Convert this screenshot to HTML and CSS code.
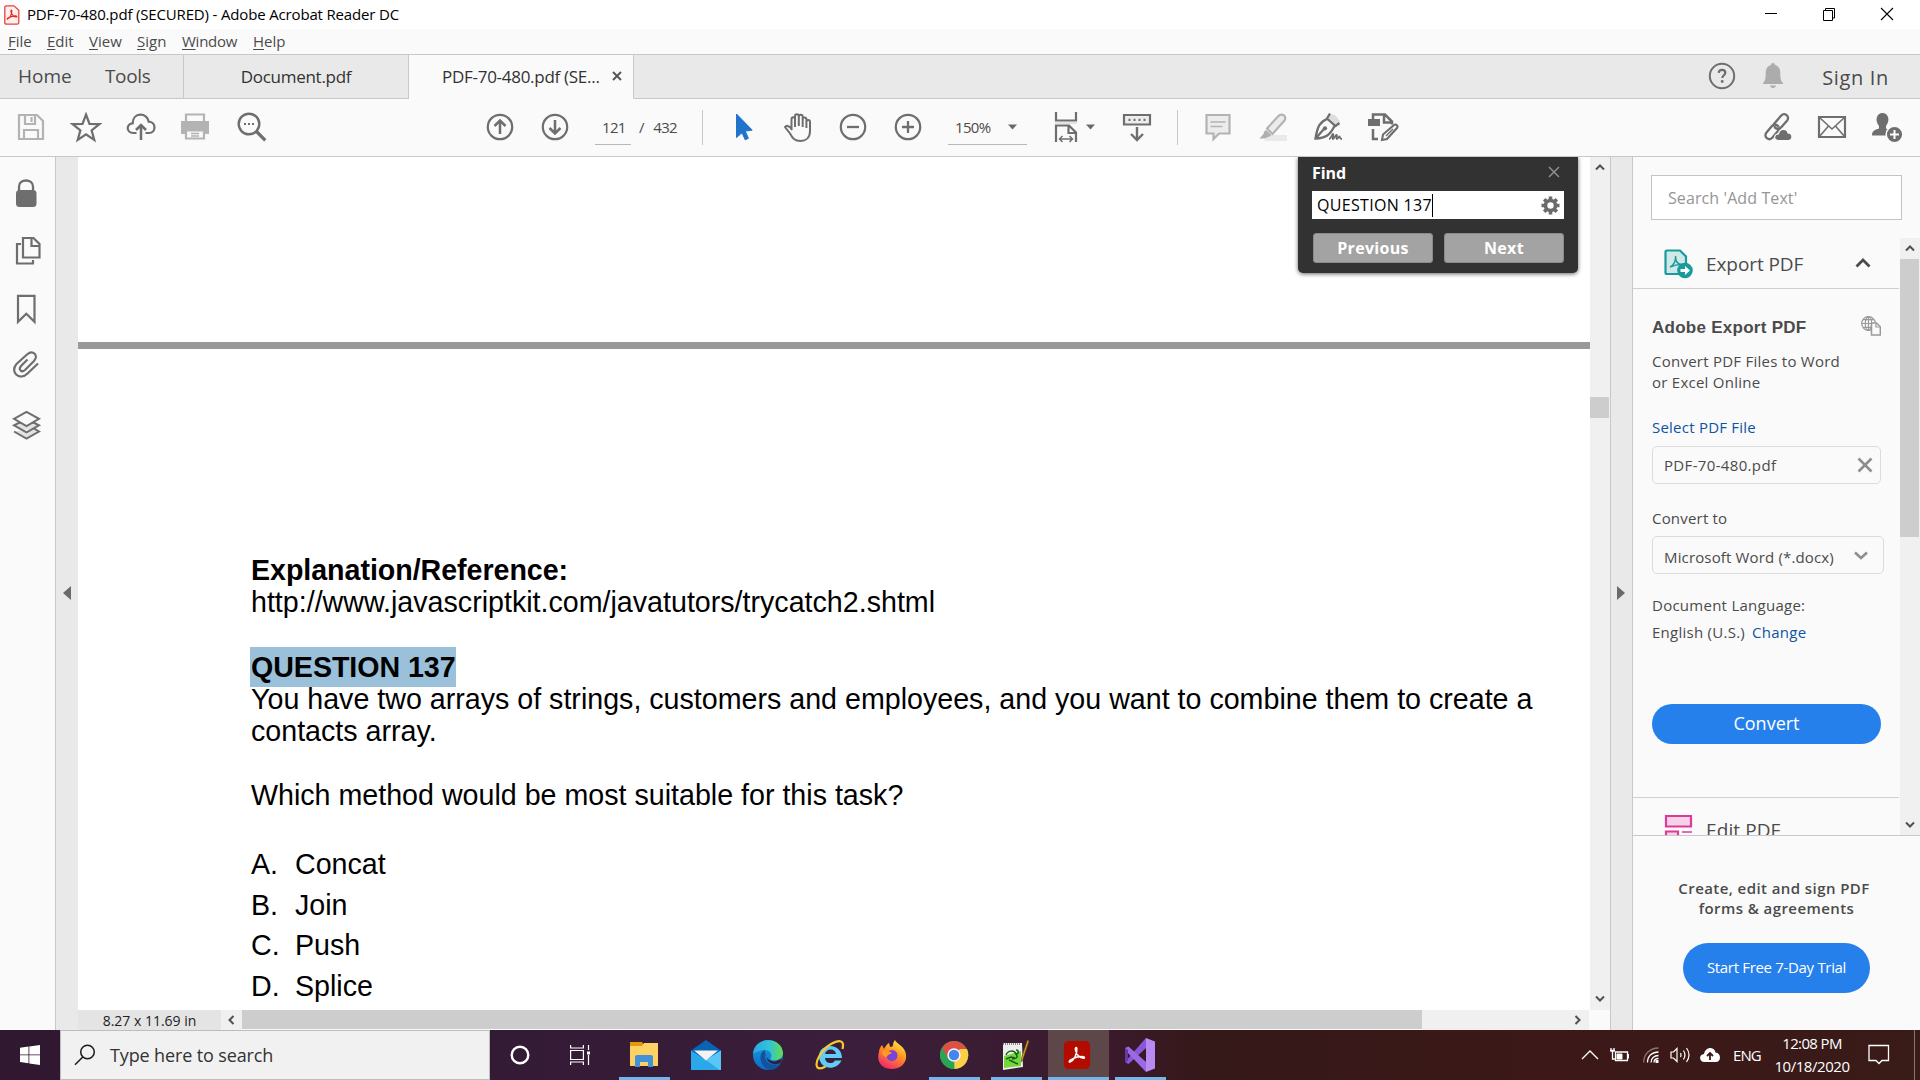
FILE: index.html
```html
<!DOCTYPE html>
<html lang="en">
<head>
<meta charset="utf-8">
<title>PDF-70-480.pdf (SECURED) - Adobe Acrobat Reader DC</title>
<link rel="stylesheet" href="styles.css">
</head>
<body>
<div class="window">
  <header class="titlebar">
    <svg class="app-icon" width="16" height="20" viewBox="0 0 16 20"><path d="M2.500 .8h7.500l4.800 4.400v12.300q0 1.700-1.700 1.700H2.500q-1.700 0-1.700-1.700v-15Q.8.8 2.500.8z" fill="#fff0ef" stroke="#e8413b" stroke-width="1.300"/><path d="M3.500 14c2.500-1 4.500-5 4.300-8.200-.1-1.300-1.300-.6-.8 1 .8 2.700 2.700 5 5.200 5.200 1.200 0 .8-1.300-1-1.200-2.600.2-5 .9-7.200 2.200-1.200.8-.9 1.300-.5 1z" fill="none" stroke="#e8281e" stroke-width="1.200"/></svg>
    <span class="title">PDF-70-480.pdf (SECURED) - Adobe Acrobat Reader DC</span>
    <div class="win-buttons">
      <svg width="14" height="14" viewBox="0 0 14 14"><path d="M1 6.500h12" stroke="#000"/></svg>
      <svg width="14" height="14" viewBox="0 0 14 14"><path d="M1.500 3.500h9v10h-9zM3.500 3.500v-2h9v9.500h-2" fill="none" stroke="#000"/></svg>
      <svg width="14" height="14" viewBox="0 0 14 14"><path d="M1 1l12 12M13 1L1 13" stroke="#000" stroke-width="1.100"/></svg>
    </div>
  </header>
  <nav class="menubar">
    <span class="m1"><u>F</u>ile</span><span class="m2"><u>E</u>dit</span><span class="m3"><u>V</u>iew</span><span class="m4"><u>S</u>ign</span><span class="m5"><u>W</u>indow</span><span class="m6"><u>H</u>elp</span>
  </nav>
  <div class="tabbar">
    <div class="main-tabs"><span class="home">Home</span><span class="tools">Tools</span></div>
    <div class="tab"><span>Document.pdf</span></div>
    <div class="tab active"><span class="tab-b">PDF-70-480.pdf (SE...</span><svg width="10" height="10" viewBox="0 0 10 10"><path d="M1 1l8 8M9 1L1 9" stroke="#555" stroke-width="1.900"/></svg></div>
    <div class="account">
      <svg width="28" height="28" viewBox="0 0 28 28"><circle cx="14" cy="14" r="12.200" fill="none" stroke="#6e6e6e" stroke-width="2"/><path d="M10.700 10.800c.3-3.800 6.600-3.800 6.600 0 0 2.400-3 2.500-3 5.200" fill="none" stroke="#6e6e6e" stroke-width="2.200"/><circle cx="14.200" cy="19.500" r="1.400" fill="#6e6e6e"/></svg>
      <svg class="bell" width="22" height="26" viewBox="0 0 22 26"><path d="M11 0c1.300 0 2 .9 2 2 4 1 5.300 4.500 5.300 8 0 6 .7 8.500 2.700 9.700V21H1v-1.300C3 18.500 3.700 16 3.700 10c0-3.500 1.300-7 5.300-8 0-1.100.7-2 2-2zM8 22.500h6c-.4 3.300-5.600 3.300-6 0z" fill="#acacac"/></svg>
      <span class="signin">Sign In</span>
    </div>
  </div>
  <div class="toolbar">
    <div class="icons">
      <svg class="ic light" viewBox="0 0 32 32"><path d="M4 4h18l6 6v18H4z" /><path d="M10 4v9h10V4M16.500 6v5M9 28v-9h14v9" /></svg>
      <svg class="ic" viewBox="0 0 32 32"><path d="M16 3.500l3.500 9.300 9.900.3-7.800 6.200 2.700 9.600-8.300-5.500-8.300 5.500 2.700-9.600-7.800-6.200 9.900-.3z"/></svg>
      <svg class="ic" viewBox="0 0 32 32"><path d="M11.500 22H8.500C.8 22 1 12.500 7.700 12.300 7.500 1 22.500 1 23.700 10.700 31.500 11 31.200 22 24 22h-3.500"/><path d="M16 29V14.500M11 19l5-5 5 5" stroke-width="2.500"/></svg>
      <svg class="ic light" viewBox="0 0 32 32"><path d="M6 12V3.500h18V12z"/><path d="M1 10h28v13H1z" fill="#b3b3b3" stroke="none"/><path d="M6 19.500h18v8H6z" fill="#fafafa"/><path d="M11 22.500h8M11 25h8" stroke-width="1.300"/></svg>
      <svg class="ic" viewBox="0 0 32 32"><circle cx="14" cy="13" r="10.300" stroke-width="2.400"/><path d="M21.500 20.500l8.800 8.800" stroke-width="3.200"/><path d="M9 13h2M13 13h2M17 13h2" stroke-width="2"/></svg>
    </div>
    <div class="icons g-nav">
      <svg class="ic" viewBox="0 0 32 32"><circle cx="16" cy="16" r="12.200"/><path d="M16 23V10M10.500 15l5.500-5.500 5.500 5.500" stroke-width="2.500"/></svg>
      <svg class="ic" viewBox="0 0 32 32"><circle cx="16" cy="16" r="12.200"/><path d="M16 9v13M10.500 17l5.500 5.500 5.500-5.500" stroke-width="2.500"/></svg>
    </div>
    <div class="page-field"><span>121</span></div>
    <div class="page-total"><span>/</span><span>432</span></div>
    <i class="divider d1"></i>
    <div class="icons g-tools">
      <svg class="ic" viewBox="0 0 32 32"><path d="M9.500 3v23.500l5.500-4.700 3.200 7 3.200-1.500-3.200-7.200 7-1z" fill="#2073cb" stroke="#2073cb" stroke-width="1"/></svg>
      <svg class="ic" viewBox="0 0 32 32"><path d="M9.500 19V8.500c0-3 3.500-3 3.500 0V16M13 9V5.500c0-3 3.800-3 3.800 0V15M16.800 6c0-3 3.900-3 3.900 0v10M20.700 8.500c0-2.800 3.700-2.800 3.700 0V17M24.400 11c0-2.600 3.600-2.600 3.600 0v9c0 7-4.500 10-9.500 10-6 0-8-3-10.500-7.500l-5-6.500c1.500-2 4-1 5.200.5l2 2.500" stroke-width="2"/></svg>
      <svg class="ic" viewBox="0 0 32 32"><circle cx="16" cy="16" r="12.200"/><path d="M10 16h12" stroke-width="2.300"/></svg>
      <svg class="ic" viewBox="0 0 32 32"><circle cx="16" cy="16" r="12.200"/><path d="M10 16h12M16 10v12" stroke-width="2.300"/></svg>
    </div>
    <div class="zoom-field"><span>150%</span><svg class="caret" width="9" height="6" viewBox="0 0 9 6"><path d="M0 .5h9L4.500 5.500z" fill="#6a6a6a"/></svg></div>
    <svg class="ic g-fit" viewBox="0 0 32 32"><path d="M6 1v8.500h20V1"/><path d="M5 12h22" stroke="#ddd" stroke-width="1.500"/><path d="M6 31V14.500h13l7 7V31M18.500 15v7H26"/><path d="M9.500 28h13M12.500 25l-3 3 3 3M19.500 25l3 3-3 3" stroke-width="1.500"/></svg>
    <svg class="caret g-caret" width="9" height="6" viewBox="0 0 9 6"><path d="M0 .5h9L4.500 5.500z" fill="#6a6a6a"/></svg>
    <svg class="ic g-read" viewBox="0 0 32 32"><path d="M3 4h26v9.500H3z" fill="#ededed"/><path d="M7.500 8.800h2M12.500 8.800h2M17.500 8.800h2M22.500 8.800h2"/><path d="M16 16v12M10 23l6 6 6-6" stroke-width="2.400"/></svg>
    <i class="divider d2"></i>
    <div class="icons g-edit">
      <svg class="ic light" viewBox="0 0 32 32"><path d="M4.500 4h23v18.500H17L11.500 28v-5.500h-7z" fill="#ececec"/><path d="M8.500 11h15M8.500 15.500h12" stroke-width="1.600"/></svg>
      <svg class="ic light" viewBox="0 0 32 32"><path d="M11 24h19v6H7z" fill="#e9e9e9" stroke="none"/><path d="M10 17.500L21 5.500c3.500-4 9.500-.5 6.500 4L15.500 23z" fill="#ececec"/><path d="M9 19l5.500 5c-1.500 1.500-2.500 1.500-4 2l-2 1.500H2.500L6.500 23c0-1.500 1-3 2.500-4z" fill="#b0b0b0" stroke="none"/></svg>
      <svg class="ic" viewBox="0 0 32 32"><path d="M18 3l5 1 5 6-4 5-8-8z" fill="#ddd" stroke="none"/><path d="M18 2.500l-3 5 8.500 7.500 4-3M15 8C8 11 5.500 15 3.500 27.500 14 27 18 24 22.500 15M4 27l8-9" stroke-width="2.300"/><circle cx="13" cy="17.300" r="2.100" fill="#6e6e6e" stroke="none"/><path d="M17 28c2 0 3-5 4-5s-1 5 0 5 2.500-4 3.500-4-.5 4 .5 4 1.500-2.500 2.300-2.500 0 2.500 2.700 2.500" stroke-width="1.800"/></svg>
      <svg class="ic" viewBox="0 0 32 32"><path d="M1 8h12v7H1z" fill="#6e6e6e" stroke="none"/><path d="M6 8V3.500h12l7 7v3M17 4v7.500h8M6 18v10h5" stroke-width="2.500"/><path d="M15 29l1-5.500L27 14c2-1.500 4.500 1 3 3L20 28z" stroke-width="2.100"/><path d="M19 25l7-7" stroke-width="1.500"/></svg>
    </div>
    <div class="icons g-share">
      <svg class="ic" viewBox="0 0 32 32"><g fill="none" stroke-width="2.300"><path d="M12.500 13.500l7.500-8.700c3.500-4 9.500.6 6 4.900L20.500 16c-2.500 3-6.500 2-7.300-1"/><path d="M19 17.500l-7.500 9c-3.500 4-9.500-.6-6-4.900L10.500 15.500c2.500-3 6.500-2 7.300 1"/></g><path d="M17 29.500c-4.500 0-4.500-6.500.5-6.500 1-6.500 9-5.500 9.500-1 5.500.5 5 7.500 0 7.500z" fill="#6e6e6e" stroke="#fafafa" stroke-width="1.200"/></svg>
      <svg class="ic" viewBox="0 0 32 32"><path d="M3 6h26v20H3z"/><path d="M3.500 6.500L16 18 28.500 6.500M3.500 25.500l9-10.500M28.500 25.500l-9-10.500" stroke-width="1.600"/></svg>
      <svg class="ic" viewBox="0 0 32 32"><path d="M1 24.500c0-5 3-5.500 7-7V15C3.500 9.500 5.500 2 11.500 2S19.500 9.500 15 15v2.500c2 .8 4 1.300 5.500 2.500L17 24.500z" fill="#6e6e6e" stroke="none"/><circle cx="23.500" cy="23.500" r="8.300" fill="#6e6e6e" stroke="#fafafa" stroke-width="1.500"/><path d="M19 23.500h9M23.500 19v9" stroke="#fff" stroke-width="2"/></svg>
    </div>
  </div>

  <div class="workspace">
    <aside class="rail">
      <svg viewBox="0 0 32 32"><path d="M9 15V9.500c0-8 14-8 14 0V15" fill="none" stroke="#6e6e6e" stroke-width="2.300"/><rect x="6" y="13" width="20.500" height="17" rx="3.500" fill="#6e6e6e" stroke="none"/></svg>
      <svg viewBox="0 0 32 32"><path d="M11 9H7v19.500h16V25M13 3h10.500l6 6v13.500H13zM21.500 3.500V11h7.500"/></svg>
      <svg viewBox="0 0 32 32"><path d="M8 2.800h16.500v26l-8.200-8-8.300 8z"/></svg>
      <svg class="clip" viewBox="0 0 32 32"><path d="M28 15.500L17.500 25.500c-8 8-18-1.500-11-9.500L17 6.500c6-5 12 1 7 6.500l-9 9c-3.500 3-7-.5-4-4l6.500-6.500"/></svg>
      <svg viewBox="0 0 32 32"><path d="M4 22.500l12.500 7 12.500-7-5-3M4 16.300l5-2.500 15 0 5 2.500-12.500 7z" fill="#e2e2e2" stroke-width="2"/><path d="M4 9.800l12.500-7 12.500 7-12.500 7.200z" fill="#fafafa" stroke-width="2"/></svg>
    </aside>
    <div class="gutter"><svg width="8" height="14" viewBox="0 0 8 14"><path d="M8 0v14L0 7z" fill="#6a6a6a"/></svg></div>
    <main class="viewer">
      <div class="view-main">
        <div class="pages">
          <div class="page-end"></div>
          <article class="page">
            <p class="b">Explanation/Reference:</p>
            <p>http://www.javascriptkit.com/javatutors/trycatch2.shtml</p>
            <p class="b q"><mark>QUESTION 137</mark></p>
            <p>You have two arrays of strings, customers and employees, and you want to combine them to create a<br>contacts array.</p>
            <p class="ask">Which method would be most suitable for this task?</p>
            <ol><li><span>A.</span>Concat</li><li><span>B.</span>Join</li><li><span>C.</span>Push</li><li><span>D.</span>Splice</li></ol>
          </article>
          <section class="find">
            <div class="find-head"><b>Find</b><svg width="12" height="12" viewBox="0 0 12 12"><path d="M1 1l10 10M11 1L1 11" stroke="#909090" stroke-width="1.500"/></svg></div>
            <div class="find-input"><span>QUESTION 137</span><svg width="19" height="19" viewBox="-9.500 -9.500 19 19"><circle r="5" fill="none" stroke="#6a6a6a" stroke-width="3.600"/><path d="M0-9v3M0 9V6M-9 0h3M9 0H6M-6.300-6.300l2 2M6.300 6.300l-2-2M-6.300 6.300l2-2M6.300-6.300l-2 2" stroke="#6a6a6a" stroke-width="3.600"/></svg></div>
            <div class="find-btns"><b>Previous</b><b>Next</b></div>
          </section>
        </div>
        <div class="vscroll">
          <svg width="10" height="8" viewBox="0 0 10 8"><path d="M1 6.500l4-4 4 4" /></svg>
          <i class="thumb"></i>
          <svg class="down" width="10" height="8" viewBox="0 0 10 8"><path d="M1 1.500l4 4 4-4" /></svg>
        </div>
      </div>
      <div class="hrow">
        <span class="size">8.27 x 11.69 in</span>
        <span class="hbtn"><svg width="8" height="10" viewBox="0 0 8 10"><path d="M6.500 1l-4 4 4 4"/></svg></span>
        <i class="hthumb"></i>
        <span class="htrack"><svg width="8" height="10" viewBox="0 0 8 10"><path d="M1.500 1l4 4-4 4"/></svg></span>
      </div>
    </main>
    <div class="gutter right"><svg width="8" height="14" viewBox="0 0 8 14"><path d="M0 0v14l8-7z" fill="#6a6a6a"/></svg></div>
    <aside class="panel">
      <div class="search-wrap"><div class="search">Search 'Add Text'</div></div>
      <div class="panel-scroll">
        <div class="panel-body">
          <div class="sec-head">
            <svg width="30" height="30" viewBox="0 0 30 30"><path d="M3 1.500h13l6 6V25H3q-1.500 0-1.500-1.500V3q0-1.500 1.500-1.500z" fill="#cfe8e8" stroke="#1b9a9a" stroke-width="2.200"/><path d="M6 18c4-2 5.800-6 5.600-11M11.600 8c0 4 2 7.500 6.500 7.500-4 0-8 .5-12.100 2.500" fill="none" stroke="#1b9a9a" stroke-width="1.400"/><circle cx="21" cy="21.500" r="7.800" fill="#1b9a9a"/><path d="M16.500 20h4.500v-3l5 4.500-5 4.500v-3h-4.500z" fill="#fff"/></svg>
            <span class="sec-title">Export PDF</span>
            <svg class="chev" width="16" height="10" viewBox="0 0 16 10"><path d="M1.500 8.500L8 2l6.500 6.500" fill="none" stroke="#4b4b4b" stroke-width="2.800"/></svg>
          </div>
          <div class="export">
            <div class="exp-title"><b>Adobe Export PDF</b><svg width="20" height="20" viewBox="0 0 20 20"><g fill="none" stroke="#9a9a9a" stroke-width="1.200"><circle cx="7.500" cy="7.500" r="6.800"/><ellipse cx="7.500" cy="7.500" rx="3.200" ry="6.800"/><path d="M.7 7.500h13.600M7.500.7v13.600M2 3.700h11M2 11.300h11"/><path d="M10.500 7h5l3.800 3.800V19h-8.800z" fill="#fafafa" stroke-width="1.500"/><path d="M15 7.500V11h4"/></g></svg></div>
            <p class="desc">Convert PDF Files to Word<br>or Excel Online</p>
            <a class="sel-file">Select PDF File</a>
            <div class="box file"><span>PDF-70-480.pdf</span><svg width="16" height="16" viewBox="0 0 16 16"><path d="M1.500 1.500l13 13M14.500 1.500l-13 13" stroke="#8e8e8e" stroke-width="2.600"/></svg></div>
            <label class="conv">Convert to</label>
            <div class="box select"><span>Microsoft Word (*.docx)</span><svg width="14" height="9" viewBox="0 0 14 9"><path d="M1 1.500l6 5.500 6-5.500" fill="none" stroke="#8e8e8e" stroke-width="2.500"/></svg></div>
            <p class="lang">Document Language:<br>English (U.S.)<a class="change">Change</a></p>
            <div class="convert">Convert</div>
          </div>
          <div class="sec-head edit">
            <svg width="30" height="30" viewBox="0 0 30 30"><path d="M2 2h25v10.500H2zM2 17.500h12V28H2z" fill="#f6d2e8" stroke="#dd3a9a" stroke-width="2.200"/><path d="M18 18h10" stroke="#dd3a9a" stroke-width="1.500"/></svg>
            <span class="sec-title">Edit PDF</span>
          </div>
        </div>
        <div class="vscroll">
          <svg width="10" height="8" viewBox="0 0 10 8"><path d="M1 6.500l4-4 4 4" /></svg>
          <i class="thumb"></i>
          <svg class="down" width="10" height="8" viewBox="0 0 10 8"><path d="M1 1.500l4 4 4-4" /></svg>
        </div>
      </div>
      <div class="promo">
        <p><span class="lead">Create, edit and sign PDF</span><br>forms &amp; agreements</p>
        <div class="trial">Start Free 7-Day Trial</div>
      </div>
    </aside>
  </div>

  <footer class="taskbar">
    <div class="start"><svg width="20" height="20" viewBox="0 0 20 20"><path d="M0 2.800L8.500 1.600v7.900H0zM9.300 1.500L20 0v9.500H9.300zM0 10.300h8.500v7.900L0 17.100zM9.300 10.300H20V20L9.300 18.400z" fill="#fff"/></svg></div>
    <div class="tsearch"><svg width="22" height="22" viewBox="0 0 22 22"><circle cx="13.500" cy="8" r="6.800" fill="none" stroke="#1a1a1a" stroke-width="1.500"/><path d="M8.800 13L1 20.800" stroke="#1a1a1a" stroke-width="1.500"/></svg><span>Type here to search</span></div>
    <div class="task t-cortana"><svg width="20" height="20" viewBox="0 0 20 20"><circle cx="10" cy="10" r="8.300" fill="none" stroke="#fff" stroke-width="2.400"/></svg></div>
    <div class="task t-view"><svg width="20" height="20" viewBox="0 0 20 20"><g fill="none" stroke="#fff" stroke-width="1.200"><path d="M.6 5.500h12.800v9H.6zM.6 0v3h12.800V0M.6 20v-3h12.800v3M18.500 0v5M18.500 10v10"/></g><path d="M17 6.500h3v3h-3z" fill="#fff"/></svg></div>
    <div class="task t-app on"><svg viewBox="0 0 30 30"><path d="M1 2h12l2 3-2 3H1z" fill="#e09a0b"/><path d="M1 6h12l2-3h14v23H1z" fill="#fdd263"/><path d="M6 27V17q0-2 2-2h14q2 0 2 2v10h-5v-5h-8v5z" fill="#4192d9"/></svg></div>
    <div class="task t-app"><svg viewBox="0 0 30 30"><path d="M0 10.500L15 0l15 10.500V20H0z" fill="#0a64b4"/><path d="M0 10.500V31h30V10.500L15 20z" fill="#2ba8ea"/><path d="M15 20l15-9.500V31z" fill="#59c6f7"/><path d="M3 10.500h24L15 20.500z" fill="#f3f3f3"/></svg></div>
    <div class="task t-app"><svg viewBox="0 0 30 30"><defs><linearGradient id="eg" x1="0" x2="1"><stop offset="0" stop-color="#29a8e4"/><stop offset=".55" stop-color="#32c3d8"/><stop offset="1" stop-color="#62de48"/></linearGradient><linearGradient id="eb" x1="0" y1="0" x2="0" y2="1"><stop offset="0" stop-color="#1ba0e2"/><stop offset="1" stop-color="#0b6bc4"/></linearGradient></defs><circle cx="15" cy="15" r="15" fill="url(#eb)"/><path d="M0 14C1-4 29-4 30 13c0 7-9 9-13 6 3-3 1-9-5-9-5 0-9 2-12 4z" fill="url(#eg)"/><path d="M12 10c-8 3-5 18 5 20 5 0 9-3 11-6.500-8 3.500-17-.5-16-9z" fill="#12539f"/><path d="M13 12.500c-2 4 3 9 9 9l7-3c-.5 2-.8 3.500-1.500 4.500-6 3-15.500.5-14.500-10.500z" fill="#361d39"/></svg></div>
    <div class="task t-app"><svg viewBox="0 0 30 30"><path d="M27 18H10c.5 6 8 6.500 10 2.500h6.500C21 32 4 29.500 4 16S27 2 27 18zM10 14h11c-.5-6-10-6-11 0z" fill="#5fcdf8"/><path d="M27.500 9C30-1 23 0 16 4 6 10-1 23 2.500 27.500 4.500 29 8 28 10.500 26.500" fill="none" stroke="#f6c92c" stroke-width="2.200"/></svg></div>
    <div class="task t-app"><svg viewBox="0 0 30 30"><defs><linearGradient id="ff" x1=".8" y1="0" x2=".3" y2="1"><stop offset="0" stop-color="#fff04a"/><stop offset=".45" stop-color="#ff9420"/><stop offset="1" stop-color="#f0246e"/></linearGradient></defs><path d="M18 0c1 3 8 6 10 11 4 10-3 18-13 18S-1 22 2 12c0-2 1-5 3-7l2 4c1-2 3-5 5-6l1 4c2 0 3-1 3-2 0-2 1-4 2-5z" fill="url(#ff)"/><circle cx="15" cy="15.500" r="5.500" fill="#7d42d8"/><path d="M5 12c3-3 7-1 10 1-2 1-5 2-5 4-3 0-5-2-5-5z" fill="#ff9a1f"/></svg></div>
    <div class="task t-app on"><svg viewBox="0 0 30 30"><circle cx="15" cy="15" r="14" fill="#2aa455"/><path d="M15 15L2.900 8A14 14 0 0 1 27.100 8L29 15z" fill="#dd5144"/><path d="M15 15L21 9h7a14 14 0 0 1-12.500 20z" fill="#fdcf46"/><path d="M2.900 8L9 19l6-4V8z" fill="#dd5144"/><path d="M3 8l6 10 6 4-1 7A14 14 0 0 1 3 8z" fill="#2aa455"/><circle cx="15" cy="15" r="6.700" fill="#f5f5f5"/><circle cx="15" cy="15" r="5.200" fill="#4585ee"/></svg></div>
    <div class="task t-app on"><svg viewBox="0 0 30 30"><path d="M2 3h19l1 24L2 30z" fill="#eee"/><path d="M2 4h18" stroke="#888" stroke-width="2" stroke-dasharray="1 1"/><path d="M3 16l17-5v15L3 28z" fill="#75d83a"/><path d="M5 15c2-5 8-5 10-1 3 4-1 5-4 5M15 10c3 0 3 4 0 4M8 20c3 1 6 3 9 4M5 19l5-2 4 1" fill="none" stroke="#17601a" stroke-width="1.500"/><path d="M28 1l-6 18-1.500 3v-4l6-18z" fill="#e6a52a" stroke="#6b4312" stroke-width=".6"/></svg></div>
    <div class="task t-app on current"><svg viewBox="0 0 30 30"><rect x="1" y="0" width="28" height="30" rx="5" fill="#b30b00"/><path d="M7.500 22.500c4-1.500 8-8.500 7.300-14.500-.3-2-2-1-1.500 1.500 1 4.500 4.500 9 8.500 9 2 0 1.500-2-1.500-2-4.500 0-9 1.500-12.500 4-1.500 1.200-1.300 2.500-.3 2z" fill="none" stroke="#fff" stroke-width="1.600"/></svg></div>
    <div class="task t-app on vs"><svg viewBox="0 0 30 34"><path d="M21 0l9 3.500v27L21 34z" fill="#b98af2"/><path d="M21 0v10L3.500 26 0 24 20 1z" fill="#8b57d6"/><path d="M0 10L3.500 8.500 21 24v10L0 12z" fill="#9d68e4"/><path d="M0 10l3 2v11L0 24z" fill="#6a36ae"/></svg></div>
    <div class="tray">
      <svg width="18" height="10" viewBox="0 0 18 10"><path d="M1 9l8-8 8 8" fill="none" stroke="#fff" stroke-width="1.300"/></svg>
      <svg class="y-bat" width="20" height="16" viewBox="0 0 20 16"><path d="M5.500 5h12v8.500h-12z" fill="none" stroke="#fff" stroke-width="1.300"/><path d="M18.500 7v4.500M7 7h5v5H7z" stroke="#fff" fill="#fff" stroke-width="1"/><path d="M1 1v3h3V1M2.500 4v8H5M0 3.500h5" fill="none" stroke="#fff" stroke-width="1.300"/></svg>
      <svg class="y-wifi" width="17" height="16" viewBox="0 0 17 16"><g fill="none" stroke="#fff" stroke-width="1.300"><path d="M.7 15.500C.7 7 7 1 15.500 1" stroke="#8c7270"/><path d="M4.500 15.500C4.500 9 9 5 15.500 5"/><path d="M8 15.500c0-4 3-7 7.500-7"/><path d="M11 15.500c0-2 1.500-4 4.500-4"/></g><path d="M12.500 13h3v3h-3z" fill="#fff"/></svg>
      <svg class="y-vol" width="21" height="18" viewBox="0 0 21 18"><path d="M1 6h2.500L7 2.500v13L3.500 12H1zM10.500 7q1 2 0 4M13.500 4.500q2.800 4.500 0 9M16.500 2q5 7 0 14" fill="none" stroke="#fff" stroke-width="1.200"/></svg>
      <svg class="y-cloud" width="20" height="14" viewBox="0 0 20 14"><path d="M4.500 14C-1 14-1.500 6.500 4 6 5-1.500 14.500-2 15.500 4.500 21.500 5 21.500 14 15.500 14z" fill="#fff"/><path d="M10 12V5M7 8l3-3 3 3" fill="none" stroke="#3c1919" stroke-width="1.800"/></svg>
      <span class="eng">ENG</span>
      <div class="clock"><span class="time">12:08 PM</span><span class="date">10/18/2020</span></div>
      <svg class="y-note" width="22" height="22" viewBox="0 0 22 22"><path d="M1 1.500h19.500v15h-6.500l-3 3-3-3H1z" fill="none" stroke="#fff" stroke-width="1.300"/></svg>
      <i class="peek"></i>
    </div>
  </footer>
</div>
</body>
</html>
```
FILE: styles.css
```css
* { box-sizing: border-box; }
body { margin: 0; font-family: "Open Sans", "Noto Sans", sans-serif; color: #4b4b4b; background: #fafafa; }
p, ol { margin: 0; padding: 0; }
svg { display: block; flex: none; }
span, b, a { white-space: nowrap; }
.window { width: 1920px; height: 1080px; display: flex; flex-direction: column; overflow: hidden; }

.titlebar { height: 29px; background: #fff; display: flex; align-items: center; padding: 0 0 1px 4px; color: #000; font-size: 15px; letter-spacing: -0.16px; }
.titlebar .title { margin-left: 7px; }
.app-icon { margin-top: 1px; }
.win-buttons { margin-left: auto; display: flex; gap: 44px; padding-right: 26px; }

.menubar { height: 25px; background: #fafafa; display: flex; gap: 16px; padding-left: 8px; font-size: 15px; line-height: 25px; }
.menubar u { text-underline-offset: 2px; text-decoration-thickness: 1px; }
.m1 { width: 23px; }
.m2 { width: 26px; }
.m3 { width: 32px; }
.m4 { width: 29px; }
.m5 { width: 55px; letter-spacing: -0.25px; }

.tabbar { height: 45px; background: #e9e9e9; border-top: 1px solid #c8c8c8; display: flex; }
.main-tabs, .tab, .account { border-bottom: 1px solid #c8c8c8; display: flex; align-items: center; padding-bottom: 1px; }
.main-tabs { width: 184px; padding-left: 18px; font-size: 19px; border-right: 1px solid #c8c8c8; }
.home { width: 87px; }
.tools { letter-spacing: -0.35px; }
.tab { width: 225px; border-right: 1px solid #c8c8c8; font-size: 17px; letter-spacing: -0.28px; color: #323232; justify-content: center; }
.tab.active { background: #fafafa; border-bottom-color: #fafafa; justify-content: flex-start; padding-left: 33px; }
.tab-b { width: 170px; }
.account { flex: 1; justify-content: flex-end; padding-right: 31px; font-size: 20px; font-weight: 500; }
.bell { margin-left: 26px; margin-right: 38px; }
.signin { letter-spacing: .65px; padding-top: 2px; }

.toolbar { height: 58px; background: #fafafa; border-bottom: 1px solid #c8c8c8; display: flex; align-items: center; padding: 0 17px 1px 15px; font-size: 15px; letter-spacing: -0.7px; }
.icons { display: flex; gap: 23px; }
.ic { width: 32px; height: 32px; fill: none; stroke: #6e6e6e; stroke-width: 2.2; }
.ic.light { stroke: #b3b3b3; }
.g-nav { margin-left: 217px; }
.page-field { width: 36px; height: 36px; line-height: 36px; margin-left: 24px; border-bottom: 1px solid #b8b8b8; padding-left: 7px; }
.page-total { width: 44px; margin-left: 8px; display: flex; justify-content: space-between; padding-right: 6px; }
.divider { width: 1px; height: 35px; background: #c8c8c8; }
.d1 { margin-left: 19px; }
.g-tools { margin-left: 24px; }
.zoom-field { width: 79px; height: 36px; line-height: 36px; margin-left: 24px; border-bottom: 1px solid #b8b8b8; padding: 0 10px 0 7px; display: flex; justify-content: space-between; align-items: center; }
.g-fit { margin-left: 23px; }
.g-caret { margin-left: 4px; }
.g-read { margin-left: 26px; }
.d2 { margin-left: 24px; }
.g-edit { margin-left: 24px; }
.g-share { margin-left: auto; }

.workspace { height: 873px; display: flex; }
.rail { width: 56px; border-right: 1px solid #c8c8c8; padding: 20px 0 0 10px; display: flex; flex-direction: column; gap: 26px; }
.rail svg { width: 32px; height: 32px; fill: none; stroke: #6e6e6e; stroke-width: 2.2; }
.rail .clip { margin-top: -3px; margin-bottom: 3px; }
.gutter { width: 22px; background: #e9e9e9; display: flex; align-items: center; padding: 0 0 2px 7px; }
.gutter.right { width: 23px; border-left: 1px solid #c8c8c8; border-right: 1px solid #c8c8c8; padding-left: 6px; }
.viewer { width: 1532px; display: flex; flex-direction: column; }
.view-main { height: 853px; display: flex; }
.pages { width: 1512px; background: #fff; position: relative; overflow: hidden; }
.page-end { height: 192px; border-bottom: 7px solid #999; }
.page { padding: 205px 0 0 173px; font: 28.640px/32px "Liberation Sans", Arial, sans-serif; color: #000; white-space: nowrap; }
.b { font-weight: bold; letter-spacing: -0.05px; }
.q { margin-top: 33px; }
.q mark { background: #9bc0d9; color: #000; padding: 4px 0 4px 1px; margin-left: -1px; }
.ask { margin-top: 32px; }
.page ol { list-style: none; margin-top: 33px; line-height: 40.700px; }
.page li { display: flex; }
.page li span { width: 44px; }

.find { position: absolute; top: 0; left: 1220px; width: 280px; height: 116px; background: #323232; border-radius: 0 0 5px 5px; box-shadow: 0 1px 4px rgba(0,0,0,.6); padding: 0 14px; font-size: 16px; }
.find-head { height: 34px; display: flex; justify-content: space-between; align-items: center; color: #fff; padding: 0 4px 2px 0; }
.find-head b { letter-spacing: -0.1px; }
.find-head svg { margin-top: -3px; }
.find-input { height: 28px; background: #fff; color: #000; display: flex; justify-content: space-between; align-items: center; padding: 0 4px 0 5px; letter-spacing: .32px; }
.find-input span { border-right: 1px solid #000; line-height: 23px; }
.find-btns { margin-top: 14px; display: flex; gap: 11px; padding-left: 1px; letter-spacing: .3px; }
.find-btns b { width: 120px; height: 30px; background: #a3a3a3; border: 1px solid #8a8a8a; border-radius: 3px; color: #fff; text-align: center; line-height: 28px; }

.vscroll { width: 20px; background: #f0f0f0; display: flex; flex-direction: column; align-items: center; padding: 6px 0 7px; }
.vscroll path, .hrow path { fill: none; stroke: #505050; stroke-width: 2; }
.vscroll .thumb { width: 19px; height: 21px; background: #cdcdcd; margin: 226px 1px 0 0; }
.vscroll .down { margin-top: auto; }
.hrow { height: 20px; display: flex; background: #fafafa; padding-right: 21px; }
.size { width: 143px; background: #e4e4e4; color: #222; font-size: 14px; line-height: 21px; text-align: center; }
.hbtn { width: 21px; background: #f0f0f0; display: flex; align-items: center; justify-content: center; padding-right: 2px; }
.hthumb { width: 1180px; height: 19px; background: #cdcdcd; }
.htrack { flex: 1; background: #f0f0f0; display: flex; align-items: center; justify-content: flex-end; padding-right: 7px; }

.panel { width: 287px; background: #fafafa; font-size: 15px; display: flex; flex-direction: column; }
.search-wrap { height: 81px; padding: 18px 0 0 18px; }
.search { width: 251px; height: 45px; border: 1px solid #c4c4c4; background: #fff; color: #959595; font-size: 16px; line-height: 45px; padding-left: 16px; letter-spacing: .1px; }
.panel-scroll { height: 597px; display: flex; }
.panel-body { width: 267px; overflow: hidden; border-right: 1px solid #fafafa; }
.sec-head { height: 51px; border-bottom: 1px solid #d0d0d0; display: flex; align-items: center; padding: 1px 13px 0 31px; font-size: 19px; }
.sec-title { margin-left: 12px; letter-spacing: -0.08px; }
.chev { margin-left: auto; margin-right: 15px; margin-top: -2px; }
.export { height: 509px; border-bottom: 1px solid #d0d0d0; padding: 27px 0 0 19px; }
.exp-title { display: flex; justify-content: space-between; width: 229px; font: 17px/24px "Liberation Sans", Arial, sans-serif; letter-spacing: .27px; }
.desc { margin-top: 11px; line-height: 21px; letter-spacing: .25px; }
.sel-file { display: block; margin-top: 24px; line-height: 21px; letter-spacing: .23px; color: #0d54a3; }
.box { height: 38px; border: 1px solid #dcdcdc; border-radius: 5px; display: flex; align-items: center; justify-content: space-between; padding-left: 11px; }
.file { width: 229px; margin-top: 8px; padding-right: 7px; letter-spacing: .34px; }
.conv { display: block; margin-top: 24px; line-height: 21px; letter-spacing: .2px; }
.select { width: 232px; margin-top: 7px; padding-right: 15px; letter-spacing: .15px; }
.select span { padding-top: 4px; }
.lang { margin-top: 18px; line-height: 27px; letter-spacing: .26px; }
.change { margin-left: 7px; color: #0d54a3; }
.convert { margin-top: 58px; width: 229px; height: 40px; border-radius: 20px; background: #2680eb; color: #fff; font-size: 18px; line-height: 38px; text-align: center; }
.sec-head.edit { align-items: flex-start; padding-top: 16px; }
.edit .sec-title { line-height: 32px; letter-spacing: .1px; }
.panel .vscroll { padding: 6px 0; }
.panel .vscroll .thumb { height: 278px; margin-top: 7px; }
.promo { flex: 1; border-top: 1px solid #c8c8c8; display: flex; flex-direction: column; align-items: center; padding-top: 42px; }
.promo p { font-weight: 600; line-height: 20px; text-align: center; letter-spacing: .42px; }
.lead { margin-right: 5px; }
.trial { margin-top: 25px; width: 187px; height: 50px; border-radius: 25px; background: #2680eb; color: #fff; letter-spacing: -0.32px; line-height: 49px; text-align: center; }

.taskbar { height: 50px; display: flex; background: linear-gradient(90deg, #301830 0, #331a35 26%, #3b1e3b 45%, #3a1a2a 58%, #351818 63%, #3c1818 80%, #391b18 100%); color: #fff; }
.start { width: 60px; display: flex; align-items: center; padding-left: 20px; }
.tsearch { width: 430px; background: #f1f1f1; border: 1px solid #bdbdbd; color: #333; font-size: 18px; letter-spacing: -0.13px; display: flex; align-items: center; padding-left: 13px; }
.tsearch span { margin-left: 14px; }
.task { height: 50px; display: flex; align-items: center; justify-content: center; }
.t-cortana { width: 60px; }
.t-view { width: 60px; }
.t-app { width: 51px; margin-right: 11px; padding-right: 2px; }
.t-app svg { width: 30px; height: 30px; }
.on { border-bottom: 3px solid #76b4ec; padding-top: 3px; }
.current { width: 61px; margin: 0 6px 0 -5px; padding-right: 4px; background: #5e4749; }
.current svg { width: 28px; }
.vs svg { height: 34px; }
.t-view + .t-app { margin-left: 9px; }
.tray { margin-left: auto; display: flex; align-items: center; font-size: 15px; }
.y-bat { margin-left: 11px; }
.y-wifi { margin-left: 13px; }
.y-vol { margin-left: 10px; }
.y-cloud { margin-left: 9px; }
.eng { margin-left: 13px; width: 29px; letter-spacing: -0.9px; }
.clock { width: 76px; margin-left: 12px; display: flex; flex-direction: column; align-items: center; line-height: 23px; }
.time { letter-spacing: -0.65px; }
.date { letter-spacing: -0.45px; }
.y-note { margin-left: 18px; }
.peek { width: 1px; height: 50px; background: #8a7472; margin: 0 5px 0 24px; }
```
